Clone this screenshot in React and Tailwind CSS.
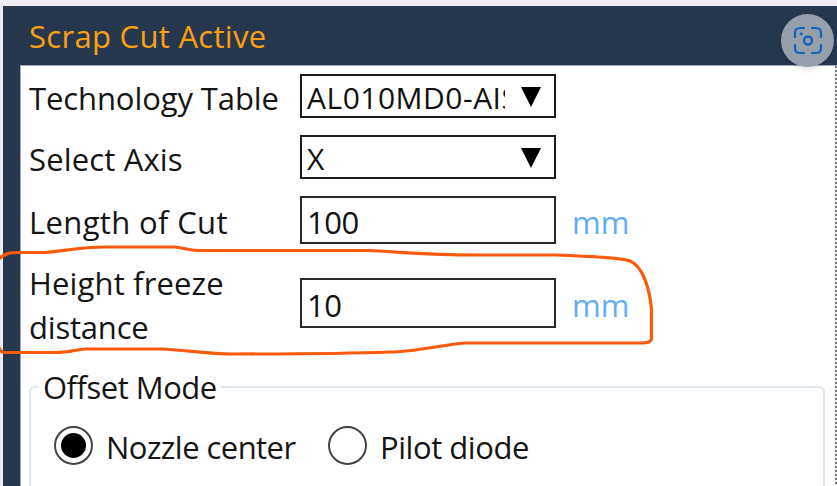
import React from "react";

function Select({ value }) {
  return (
    <div className="flex h-[44px] w-[256px] items-center border-2 border-[#1c1c1c] bg-white pl-[5px]">
      <span className="w-[198px] overflow-hidden whitespace-nowrap pt-[3px] text-[30px] leading-[40px] tracking-[0.5px] text-[#111]">
        {value}
      </span>
      <svg className="ml-[16px] mt-px shrink-0" width="20" height="20" viewBox="0 0 20 20">
        <path d="M0 0H20L10 20Z" fill="#000" />
      </svg>
    </div>
  );
}

function Field({ value, className }) {
  return (
    <div className={"flex w-[256px] items-center border-2 border-[#2a2a2a] bg-white pl-[5px] " + className}>
      <span className="pt-[4px] text-[31px] leading-[40px] tracking-[-0.5px] text-[#111]">{value}</span>
    </div>
  );
}

function Row({ label, className, children }) {
  return (
    <div className={"flex " + className}>
      <div className="w-[271px] shrink-0 leading-[44px]">{label}</div>
      {children}
    </div>
  );
}

const unit = "ml-[16px] text-[31px] leading-[44px] text-[#62adef]";

export default function App() {
  return (
    <div className="relative h-[486px] w-[837px] overflow-hidden bg-[#ececf1] pl-[3px] pt-[6px] font-['Open_Sans','Noto_Sans',sans-serif] text-[31px] leading-[44px] text-[#151515]">
      <div className="flex h-[480px] flex-col bg-[#27374e]">
        <header className="h-[59px] shrink-0 pl-[26px] pt-[8px] text-[#f9a10f]">
          <span className="tracking-[0.3px]">Scrap Cut Active</span>
        </header>
        <div className="ml-[17px] flex grow border-l border-t border-[#a3aabb] bg-white">
          <main className="w-[814px] shrink-0 pl-[8px] pt-[8px]">
            <Row
              className="h-[61px]"
              label={<span className="relative top-[2px] tracking-[-0.1px]">Technology Table</span>}
            >
              <Select value="AL010MD0-AIS" />
            </Row>
            <Row
              className="h-[61px]"
              label={<span className="relative top-[2px] tracking-[0.15px]">Select Axis</span>}
            >
              <Select value="X" />
            </Row>
            <Row
              className="h-[65px] pt-[2px]"
              label={<span className="relative top-[2px] tracking-[0.35px]">Length of Cut</span>}
            >
              <Field value="100" className="-mt-[2px] h-[48px]" />
              <span className={unit + " mt-[2px]"}>mm</span>
            </Row>
            <Row
              className="h-[88px]"
              label={
                <div>
                  <div className="tracking-[0.15px]">Height freeze</div>
                  <div className="tracking-[-0.2px]">distance</div>
                </div>
              }
            >
              <Field value="10" className="mt-[17px] h-[50px]" />
              <span className={unit + " mt-[22px]"}>mm</span>
            </Row>
            <fieldset className="mt-[16px] h-[140px] w-[796px] rounded-[6px] border-2 border-[#dfe7ed] pl-[23px]">
              <legend className="-ml-[15px] h-[44px] px-[4px] tracking-[-0.5px]">Offset Mode</legend>
              <div className="mt-[13px] flex items-center">
                <span className="flex size-[39px] items-center justify-center rounded-full border-2 border-[#444]">
                  <span className="size-[25px] rounded-full bg-black" />
                </span>
                <span className="ml-[13px] w-[222px] pt-[3px] tracking-[-0.55px]">Nozzle center</span>
                <span className="size-[39px] rounded-full border-2 border-[#444]" />
                <span className="ml-[13px] pt-[3px] tracking-[-0.45px]">Pilot diode</span>
              </div>
            </fieldset>
          </main>
          <div className="grow bg-[repeating-linear-gradient(to_bottom,#777_0_2px,#eee_2px_4px)]" />
        </div>
      </div>
      <svg className="pointer-events-none absolute left-0 top-0" width="837" height="486" fill="none">
        <path
          d="M-2 260C5 252 12 252.500 23 252.500H45C65 251 80 247 105 247H175C185 248 188 250.500 198 250.500H368C400 252 430 255 475 255H555C585 256 620 258 630 261C643 266 650 290 651.500 310V338C651.500 342 648 343 640 343H465C440 345 415 352 390 352C340 354 270 354 232 354C205 354 190 350 160 349H85C75 350 68 352.500 55 352.500H4Q0 352 -2 345"
          stroke="#fa5a0b"
          strokeWidth="3.2"
          strokeLinejoin="round"
        />
      </svg>
      <div className="absolute left-[781px] top-[14px] flex size-[53px] items-center justify-center rounded-full bg-[#979faa] shadow-[0_2px_6px_rgba(0,0,0,0.12)]">
        <svg width="30" height="30" viewBox="0 0 30 30" fill="none" stroke="#1065bd" strokeWidth="2.2" strokeLinecap="round">
          <path d="M2 11V7Q2 2 7 2H11M19 2H23Q28 2 28 7V11M28 19V22Q28 27 23 27H19M11 27H7Q2 27 2 22V19" />
          <circle cx="15" cy="14.5" r="4" strokeWidth="2.4" />
          <circle cx="8.2" cy="7.8" r="1.6" fill="#1065bd" stroke="none" />
        </svg>
      </div>
    </div>
  );
}
